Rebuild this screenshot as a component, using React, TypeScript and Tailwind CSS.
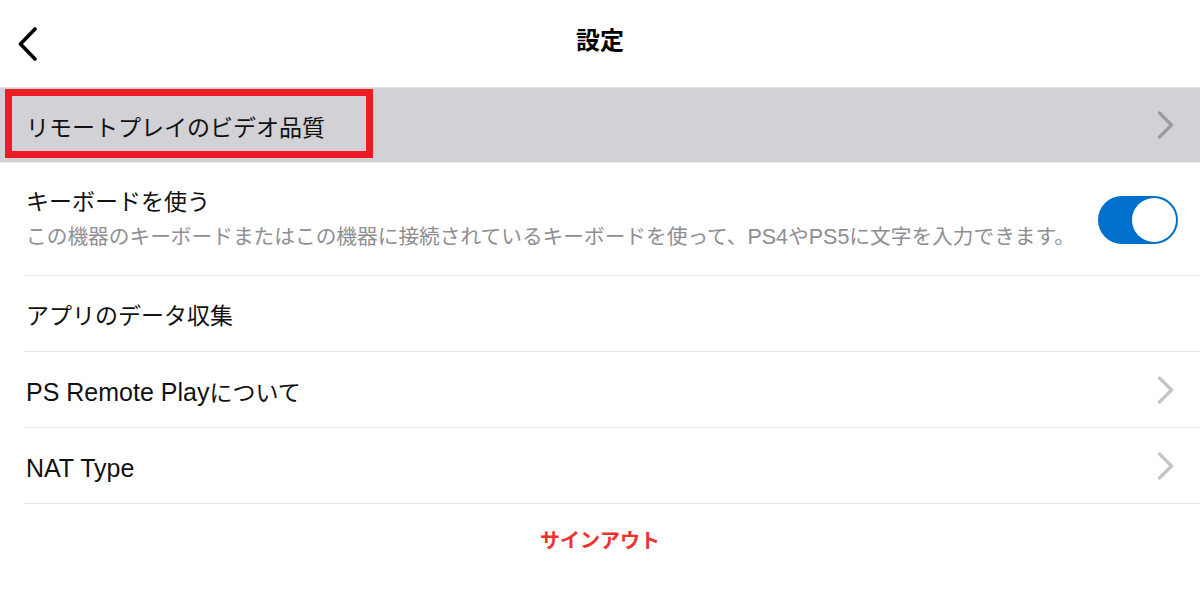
import { useState, type ReactNode } from 'react'

const font = "font-['Liberation_Sans','Noto_Sans_CJK_JP',sans-serif]"

const Chevron = ({ color }: { color: string }) => (
  <svg width="17" height="28" viewBox="0 0 17 28" fill="none">
    <path d="M2.5 2 L14.5 14 L2.5 26" stroke={color} strokeWidth="3.2" strokeLinecap="round" strokeLinejoin="round" />
  </svg>
)

const Row = ({ label, arrow }: { label: ReactNode; arrow?: boolean }) => (
  <div className="ml-[24px] h-[76px] flex items-center justify-between border-b border-[#e6e6e8] pr-[26px]">
    <span className="text-[23px] text-[#111] leading-none pl-[2px] mt-[5px]">{label}</span>
    {arrow && <Chevron color="#c4c4c7" />}
  </div>
)

const App = () => {
  const [keyboard, setKeyboard] = useState(true)

  return (
    <div className={`w-[1200px] h-[600px] bg-white overflow-hidden ${font}`}>
      {/* header */}
      <div className="h-[88px] grid grid-cols-[1fr_auto_1fr] items-center border-b border-[#e2e2e4]">
        <button className="pl-[18px] w-fit">
          <svg width="20" height="36" viewBox="0 0 20 36" fill="none">
            <path d="M17 3 L2.5 18 L17 33" stroke="#000" strokeWidth="3.6" strokeLinecap="round" strokeLinejoin="round" />
          </svg>
        </button>
        <h1 className="text-[24px] font-bold text-black leading-none mb-[6px]">設定</h1>
        <div />
      </div>

      {/* selected row */}
      <div className="relative h-[75px] bg-[#d1d1d6] flex items-center justify-between pl-[26px] pr-[26px] border-b border-[#e4e4e6]">
        <span className="text-[23px] text-[#111] leading-none mt-[6px]">リモートプレイのビデオ品質</span>
        <Chevron color="#9b9b9e" />
        <div className="absolute left-[5px] top-[1px] w-[368px] h-[69px] border-[7px] border-[#ed1c24]" />
      </div>

      {/* keyboard row */}
      <div className="ml-[24px] h-[113px] flex items-center justify-between border-b border-[#e6e6e8] pr-[22px]">
        <div className="pl-[2px] flex flex-col gap-[13px] mt-[2px]">
          <span className="text-[23px] text-[#111] leading-none">キーボードを使う</span>
          <span className="text-[20.7px] text-[#8e8e93] leading-none">
            この機器のキーボードまたはこの機器に接続されているキーボードを使って、<span className="text-[21.5px]">PS4</span>や<span className="text-[21.5px]">PS5</span>に文字を入力できます。
          </span>
        </div>
        <button
          onClick={() => setKeyboard(!keyboard)}
          className={`w-[80px] h-[48px] rounded-full p-[2px] flex mt-[2px] shrink-0 ${keyboard ? 'bg-[#0070cc] justify-end' : 'bg-[#e5e5ea] justify-start'}`}
        >
          <span className="w-[44px] h-[44px] rounded-full bg-white block" />
        </button>
      </div>

      <Row label="アプリのデータ収集" />
      <Row label={<><span className="text-[25px]">PS Remote Play</span>について</>} arrow />
      <Row label={<span className="text-[25px]">NAT Type</span>} arrow />

      <div className="flex justify-center pt-[27px]">
        <button className="text-[20px] font-bold text-[#f0302c] leading-none">サインアウト</button>
      </div>
    </div>
  )
}

export default App
